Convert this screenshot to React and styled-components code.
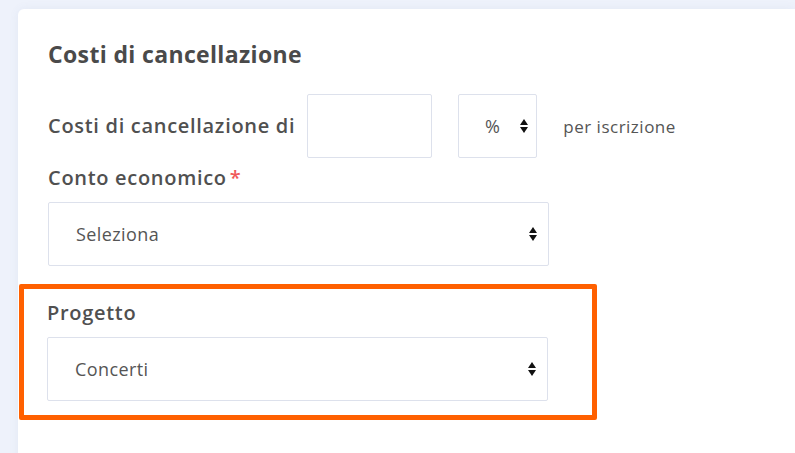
import React from "react";
import styled, { createGlobalStyle } from "styled-components";

const GlobalStyle = createGlobalStyle`
  html, body {
    margin: 0;
    padding: 0;
    background: #eef2fb;
    font-family: "Open Sans", "Noto Sans", sans-serif;
    overflow: hidden;
  }
`;

const Page = styled.div`
  padding: 9px 0 0 18px;
  height: 453px;
  box-sizing: border-box;
`;

const Card = styled.section`
  background: #ffffff;
  border-radius: 6px 0 0 0;
  box-shadow: 0 0 10px rgba(90, 110, 170, 0.08);
  padding: 31px 0 40px 30px;
  min-height: 460px;
  box-sizing: border-box;
`;

const Title = styled.h2`
  margin: 0 0 25px;
  font-size: 23px;
  line-height: 29px;
  font-weight: 700;
  letter-spacing: 0.35px;
  color: #4a4a4a;
`;

const Row = styled.div`
  display: flex;
  align-items: center;
  height: 64px;
  margin-bottom: 5px;
`;

const Label = styled.label`
  display: block;
  font-size: 20px;
  line-height: 30px;
  font-weight: 600;
  letter-spacing: 0.7px;
  color: #505050;
  margin: ${(p) => (p.$inline ? "0 12px 0 0" : "0 0 9px")};
`;

const Required = styled.span`
  color: #f05a5a;
  margin-left: 3px;
`;

const TextInput = styled.input`
  width: 125px;
  height: 64px;
  box-sizing: border-box;
  border: 1px solid #dde1ec;
  border-radius: 2px;
  outline: none;
  margin-right: 26px;
  font: inherit;
`;

const SelectBox = styled.div`
  width: ${(p) => p.$width}px;
  height: 64px;
  box-sizing: border-box;
  border: 1px solid #dde1ec;
  border-radius: 2px;
  display: flex;
  align-items: center;
  justify-content: ${(p) => (p.$compact ? "flex-end" : "space-between")};
  gap: ${(p) => (p.$compact ? "20px" : "0")};
  padding: ${(p) => (p.$compact ? "0 8px 0 0" : "0 11px 0 27px")};
  font-size: 18px;
  letter-spacing: 0.4px;
  color: #555555;
  background: #fff;
`;

const Unit = styled.span`
  font-size: 17px;
  letter-spacing: 0.5px;
  color: #555555;
  margin-left: 26px;
`;

const Highlight = styled.div`
  margin: 18px 0 0 -29px;
  width: 578px;
  box-sizing: border-box;
  border: 5px solid #ff6000;
  border-radius: 2px;
  padding: 9px 0 14px 23px;
`;

const Arrows = () => (
  <svg width="8" height="16" viewBox="0 0 8 16">
    <path d="M0 7 L4 1 L8 7 Z" fill="#111" />
    <path d="M0 9 L8 9 L4 15 Z" fill="#111" />
  </svg>
);

const Select = ({ value, width, compact }) => (
  <SelectBox $width={width} $compact={compact}>
    <span>{value}</span>
    <Arrows />
  </SelectBox>
);

export default function App() {
  return (
    <Page>
      <GlobalStyle />
      <Card>
        <Title>Costi di cancellazione</Title>
        <Row>
          <Label $inline>Costi di cancellazione di</Label>
          <TextInput type="text" />
          <Select value="%" width={79} compact />
          <Unit>per iscrizione</Unit>
        </Row>
        <Label>
          Conto economico<Required>*</Required>
        </Label>
        <Select value="Seleziona" width={501} />
        <Highlight>
          <Label>Progetto</Label>
          <Select value="Concerti" width={501} />
        </Highlight>
      </Card>
    </Page>
  );
}
